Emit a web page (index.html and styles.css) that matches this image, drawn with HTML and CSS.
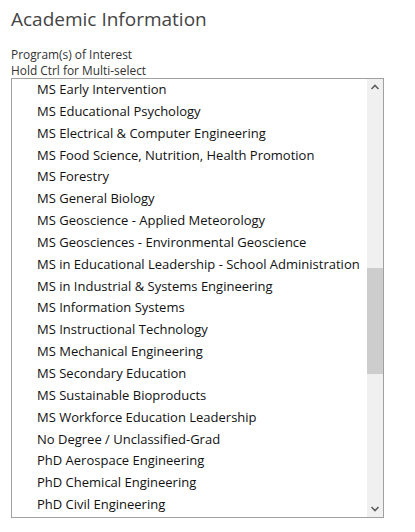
FILE: index.html
```html
<!DOCTYPE html>
<html>
<head>
<meta charset="utf-8">
<link rel="stylesheet" href="styles.css">
</head>
<body>
<div class="page">
  <h2 class="title">Academic Information</h2>
  <div class="label">Program(s) of Interest</div>
  <div class="label">Hold Ctrl for Multi-select</div>
  <div class="listbox">
    <ul class="options">
      <li>MS Early Intervention</li>
      <li>MS Educational Psychology</li>
      <li>MS Electrical &amp; Computer Engineering</li>
      <li>MS Food Science, Nutrition, Health Promotion</li>
      <li>MS Forestry</li>
      <li>MS General Biology</li>
      <li>MS Geoscience - Applied Meteorology</li>
      <li>MS Geosciences - Environmental Geoscience</li>
      <li>MS in Educational Leadership - School Administration</li>
      <li>MS in Industrial &amp; Systems Engineering</li>
      <li>MS Information Systems</li>
      <li>MS Instructional Technology</li>
      <li>MS Mechanical Engineering</li>
      <li>MS Secondary Education</li>
      <li>MS Sustainable Bioproducts</li>
      <li>MS Workforce Education Leadership</li>
      <li>No Degree / Unclassified-Grad</li>
      <li>PhD Aerospace Engineering</li>
      <li>PhD Chemical Engineering</li>
      <li>PhD Civil Engineering</li>
      <li>PhD Computational Engineering</li>
    </ul>
    <div class="scrollbar">
      <svg class="arrow" width="16" height="17" viewBox="0 0 16 17"><path d="M4.5 10 L8 6.5 L11.5 10" fill="none" stroke="#606060" stroke-width="1.6"/></svg>
      <div class="track"><div class="thumb"></div></div>
      <svg class="arrow" width="16" height="17" viewBox="0 0 16 17"><path d="M4.5 7 L8 10.5 L11.5 7" fill="none" stroke="#606060" stroke-width="1.6"/></svg>
    </div>
  </div>
</div>
</body>
</html>
```
FILE: styles.css
```css
html, body {
  margin: 0;
  padding: 0;
  background: #fff;
}
.page {
  padding: 6px 0 0 11px;
  font-family: "Open Sans", "Noto Sans", sans-serif;
  color: #333;
}
.title {
  margin: 0 0 14px 0;
  font-size: 19px;
  font-weight: normal;
  line-height: 26px;
  color: #444;
}
.label {
  font-size: 11.9px;
  line-height: 16px;
  color: #333;
}
.listbox {
  display: flex;
  width: 371px;
  height: 438px;
  border: 1px solid #a0a0a0;
  overflow: hidden;
  background: #fff;
}
.options {
  list-style: none;
  margin: 0;
  padding: 0 0 0 25px;
  flex: 1;
  overflow: hidden;
}
.options li {
  font-size: 13px;
  line-height: 21.85px;
  height: 21.85px;
  white-space: nowrap;
  color: #111;
}
.scrollbar {
  width: 16px;
  background: #f0f0f0;
  display: flex;
  flex-direction: column;
}
.arrow {
  display: block;
  flex: none;
}
.track {
  flex: 1;
  padding-top: 172px;
}
.thumb {
  height: 106px;
  background: #cdcdcd;
}
```
